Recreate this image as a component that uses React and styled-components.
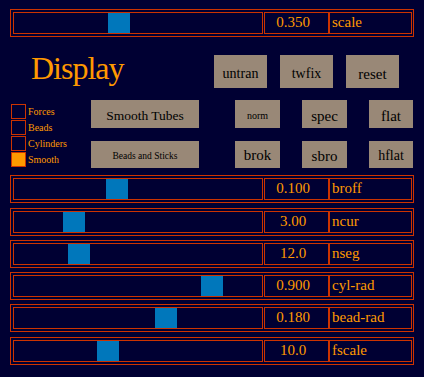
import React, { useState } from 'react';
import styled, { createGlobalStyle } from 'styled-components';

const serif = '"Liberation Serif", "DejaVu Serif", "Times New Roman", serif';

const GlobalStyle = createGlobalStyle`
    html, body {
        margin: 0;
        padding: 0;
        background-color: #000033;
    }
    * {
        box-sizing: border-box;
    }
`;

const Page = styled.div`
    width: 424px;
    height: 377px;
    padding: 9px 10px 0 10px;
    background-color: #000033;
    font-family: ${serif};
    color: #ff9900;
`;

const Row = styled.div`
    display: flex;
    width: 404px;
    height: 28px;
    margin-top: ${(p) => p.$mt || 0}px;
    padding: 2px 1px 2px 2px;
    border: 1px solid #cc3300;
`;

const Track = styled.div`
    position: relative;
    width: 250px;
    height: 22px;
    margin-right: 1px;
    border: 1px solid #cc3300;
`;

const Thumb = styled.div`
    position: absolute;
    top: 0;
    width: 22px;
    height: 20px;
    background-color: #0077bb;
`;

const Value = styled.div`
    width: 65px;
    height: 22px;
    border: 1px solid #cc3300;
    padding-right: 7px;
    font-family: ${serif};
    font-size: 15px;
    line-height: 19px;
    text-align: center;
`;

const Name = styled.div`
    width: 83px;
    height: 22px;
    border: 1px solid #cc3300;
    padding-left: 2px;
    font-family: ${serif};
    font-size: 15px;
    line-height: 19px;
`;

const Middle = styled.div`
    display: flex;
    flex-direction: column;
    height: 131px;
    padding-top: 18px;
`;

const Header = styled.div`
    display: flex;
    height: 33px;
`;

const Title = styled.h1`
    margin: 0 0 0 21px;
    font-family: ${serif};
    font-size: 32px;
    font-weight: normal;
    line-height: 27px;
    letter-spacing: -1px;
    color: #ff9900;
`;

const ButtonGroup = styled.div`
    display: flex;
    gap: 13px;
    margin-left: auto;
    padding-right: 15px;
`;

const Button = styled.button`
    width: ${(p) => p.$w || 45}px;
    height: ${(p) => p.$h || 28}px;
    padding: ${(p) => p.$pt || 3}px 0 0 0;
    margin: 0;
    border: none;
    outline: none;
    background-color: #998877;
    color: #000000;
    font-family: ${serif};
    font-size: ${(p) => p.$fs || 15}px;
    line-height: 1;
    white-space: nowrap;
    cursor: pointer;
`;

const Lower = styled.div`
    display: flex;
    margin-top: 12px;
    height: 68px;
`;

const CheckList = styled.div`
    display: flex;
    flex-direction: column;
    gap: 1px;
    width: 80px;
    margin: 4px 0 0 1px;
`;

const CheckRow = styled.label`
    display: flex;
    align-items: center;
    gap: 2px;
    height: 15px;
    font-family: ${serif};
    font-size: 10px;
    line-height: 15px;
    cursor: pointer;
`;

const Box = styled.span`
    width: 15px;
    height: 15px;
    border: 1px solid #cc3300;
    background-color: ${(p) => (p.$on ? '#ff9900' : 'transparent')};
`;

const StyleColumn = styled.div`
    display: flex;
    flex-direction: column;
    gap: 13px;
    width: 108px;
`;

const ModeGrid = styled.div`
    display: grid;
    grid-template-columns: 45px 45px 44px;
    grid-template-rows: 28px 27px;
    column-gap: 22px;
    row-gap: 13px;
    margin-left: 36px;
`;

const sliders = [
    { name: 'scale', value: '0.350', pos: 94, mt: 0 },
    { name: 'broff', value: '0.100', pos: 92, mt: 7 },
    { name: 'ncur', value: '3.00', pos: 49, mt: 5 },
    { name: 'nseg', value: '12.0', pos: 54, mt: 4 },
    { name: 'cyl-rad', value: '0.900', pos: 187, mt: 4 },
    { name: 'bead-rad', value: '0.180', pos: 141, mt: 4 },
    { name: 'fscale', value: '10.0', pos: 83, mt: 5 },
];

const modes = [
    { label: 'norm', fs: 10, pt: 4, w: 45, h: 28 },
    { label: 'spec', fs: 15, pt: 5, w: 45, h: 28 },
    { label: 'flat', fs: 15, pt: 5, w: 44, h: 28 },
    { label: 'brok', fs: 15, pt: 2, w: 45, h: 27 },
    { label: 'sbro', fs: 15, pt: 4, w: 45, h: 27 },
    { label: 'hflat', fs: 14, pt: 2, w: 44, h: 27 },
];

const SliderRow = ({ s }) => (
    <Row $mt={s.mt}>
        <Track>
            <Thumb style={{ left: s.pos }} />
        </Track>
        <Value>{s.value}</Value>
        <Name>{s.name}</Name>
    </Row>
);

const App = () => {
    const [checks, setChecks] = useState({ Forces: false, Beads: false, Cylinders: false, Smooth: true });

    const toggle = (key) => setChecks({ ...checks, [key]: !checks[key] });

    return (
        <Page>
            <GlobalStyle />
            <SliderRow s={sliders[0]} />
            <Middle>
                <Header>
                    <Title>Display</Title>
                    <ButtonGroup>
                        <Button $w={53} $h={33} $fs={14} $pt={4}>untran</Button>
                        <Button $w={53} $h={33} $fs={14} $pt={4}>twfix</Button>
                        <Button $w={53} $h={33} $fs={15} $pt={5}>reset</Button>
                    </ButtonGroup>
                </Header>
                <Lower>
                    <CheckList>
                        {Object.keys(checks).map((key) => (
                            <CheckRow key={key} onClick={() => toggle(key)}>
                                <Box $on={checks[key]} />
                                {key}
                            </CheckRow>
                        ))}
                    </CheckList>
                    <StyleColumn>
                        <Button $w={108} $h={28} $fs={13.5} $pt={4}>Smooth Tubes</Button>
                        <Button $w={108} $h={27} $fs={9.5} $pt={4}>Beads and Sticks</Button>
                    </StyleColumn>
                    <ModeGrid>
                        {modes.map((m) => (
                            <Button key={m.label} $w={m.w} $h={m.h} $fs={m.fs} $pt={m.pt}>
                                {m.label}
                            </Button>
                        ))}
                    </ModeGrid>
                </Lower>
            </Middle>
            {sliders.slice(1).map((s) => (
                <SliderRow key={s.name} s={s} />
            ))}
        </Page>
    );
};

export default App;
